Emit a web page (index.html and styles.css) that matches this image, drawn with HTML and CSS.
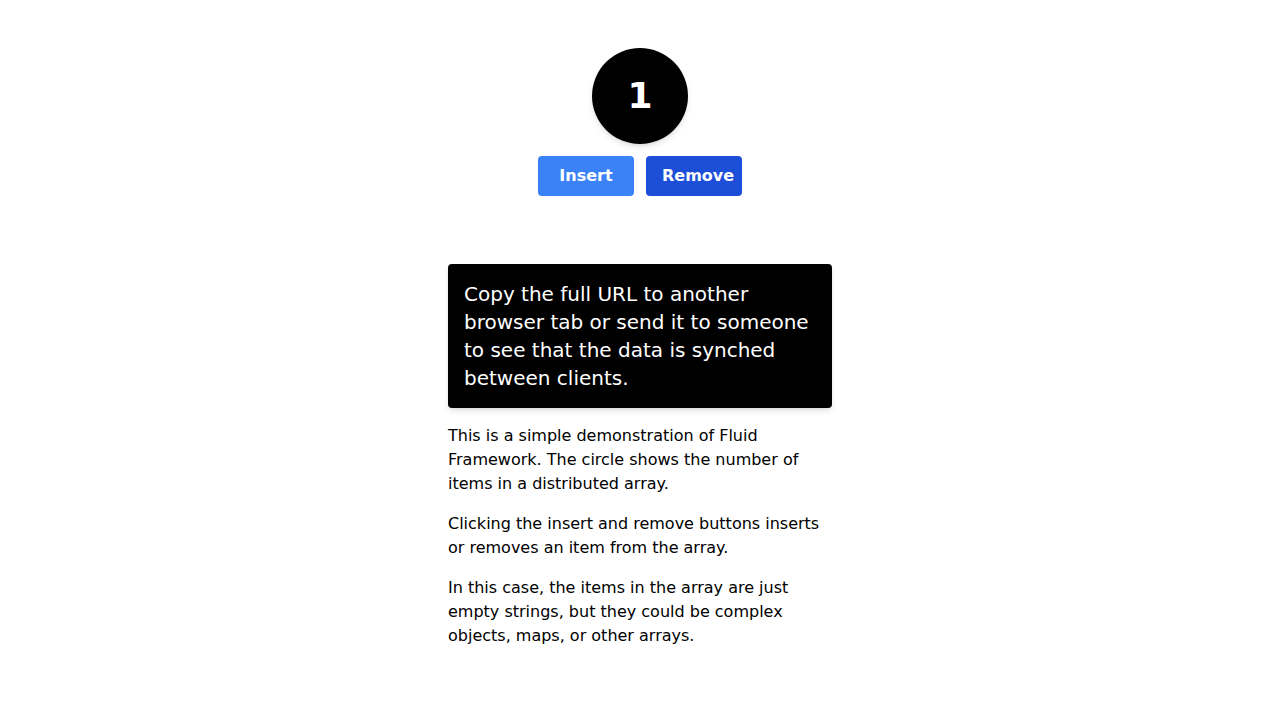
FILE: index.html
```html
<!DOCTYPE html>
<html lang="en">
<head>
<meta charset="utf-8">
<title>Fluid Demo</title>
<link rel="stylesheet" href="styles.css">
</head>
<body>
<main class="app">
  <div class="counter">1</div>
  <div class="actions">
    <button class="btn btn-insert">Insert</button>
    <button class="btn btn-remove">Remove</button>
  </div>
  <section class="info">
    <div class="callout">Copy the full URL to another browser tab or send it to someone to see that the data is synched between clients.</div>
    <p class="para">This is a simple demonstration of Fluid Framework. The circle shows the number of items in a distributed array.</p>
    <p class="para">Clicking the insert and remove buttons inserts or removes an item from the array.</p>
    <p class="para">In this case, the items in the array are just empty strings, but they could be complex objects, maps, or other arrays.</p>
  </section>
</main>
</body>
</html>
```
FILE: styles.css
```css
* { box-sizing: border-box; }
html, body { margin: 0; padding: 0; background: #fff; }
body {
  font-family: "DejaVu Sans", sans-serif;
  color: #000;
}
.app {
  display: flex;
  flex-direction: column;
  align-items: center;
  padding-top: 48px;
}
.counter {
  width: 96px;
  height: 96px;
  border-radius: 50%;
  background: #000;
  color: #fff;
  font-size: 36px;
  font-weight: bold;
  line-height: 96px;
  text-align: center;
  box-shadow: 0 4px 6px -1px rgba(0,0,0,0.1), 0 2px 4px -2px rgba(0,0,0,0.1);
}
.actions {
  display: flex;
  gap: 12px;
  margin-top: 12px;
}
.btn {
  width: 96px;
  height: 40px;
  border: none;
  border-radius: 4px;
  color: #fff;
  font-family: "DejaVu Sans", sans-serif;
  font-size: 16px;
  font-weight: bold;
  padding: 0 16px;
  white-space: nowrap;
  line-height: 40px;
}
.btn-insert { background: #3b82f6; text-align: center; }
.btn-remove { background: #1d4ed8; text-align: left; }
.info {
  width: 384px;
  margin-top: 68px;
}
.callout {
  background: #000;
  color: #fff;
  font-size: 20px;
  line-height: 28px;
  padding: 16px;
  border-radius: 4px;
  box-shadow: 0 4px 6px -1px rgba(0,0,0,0.1), 0 2px 4px -2px rgba(0,0,0,0.1);
}
.para {
  margin: 16px 0 0;
  font-size: 16px;
  line-height: 24px;
}
```
